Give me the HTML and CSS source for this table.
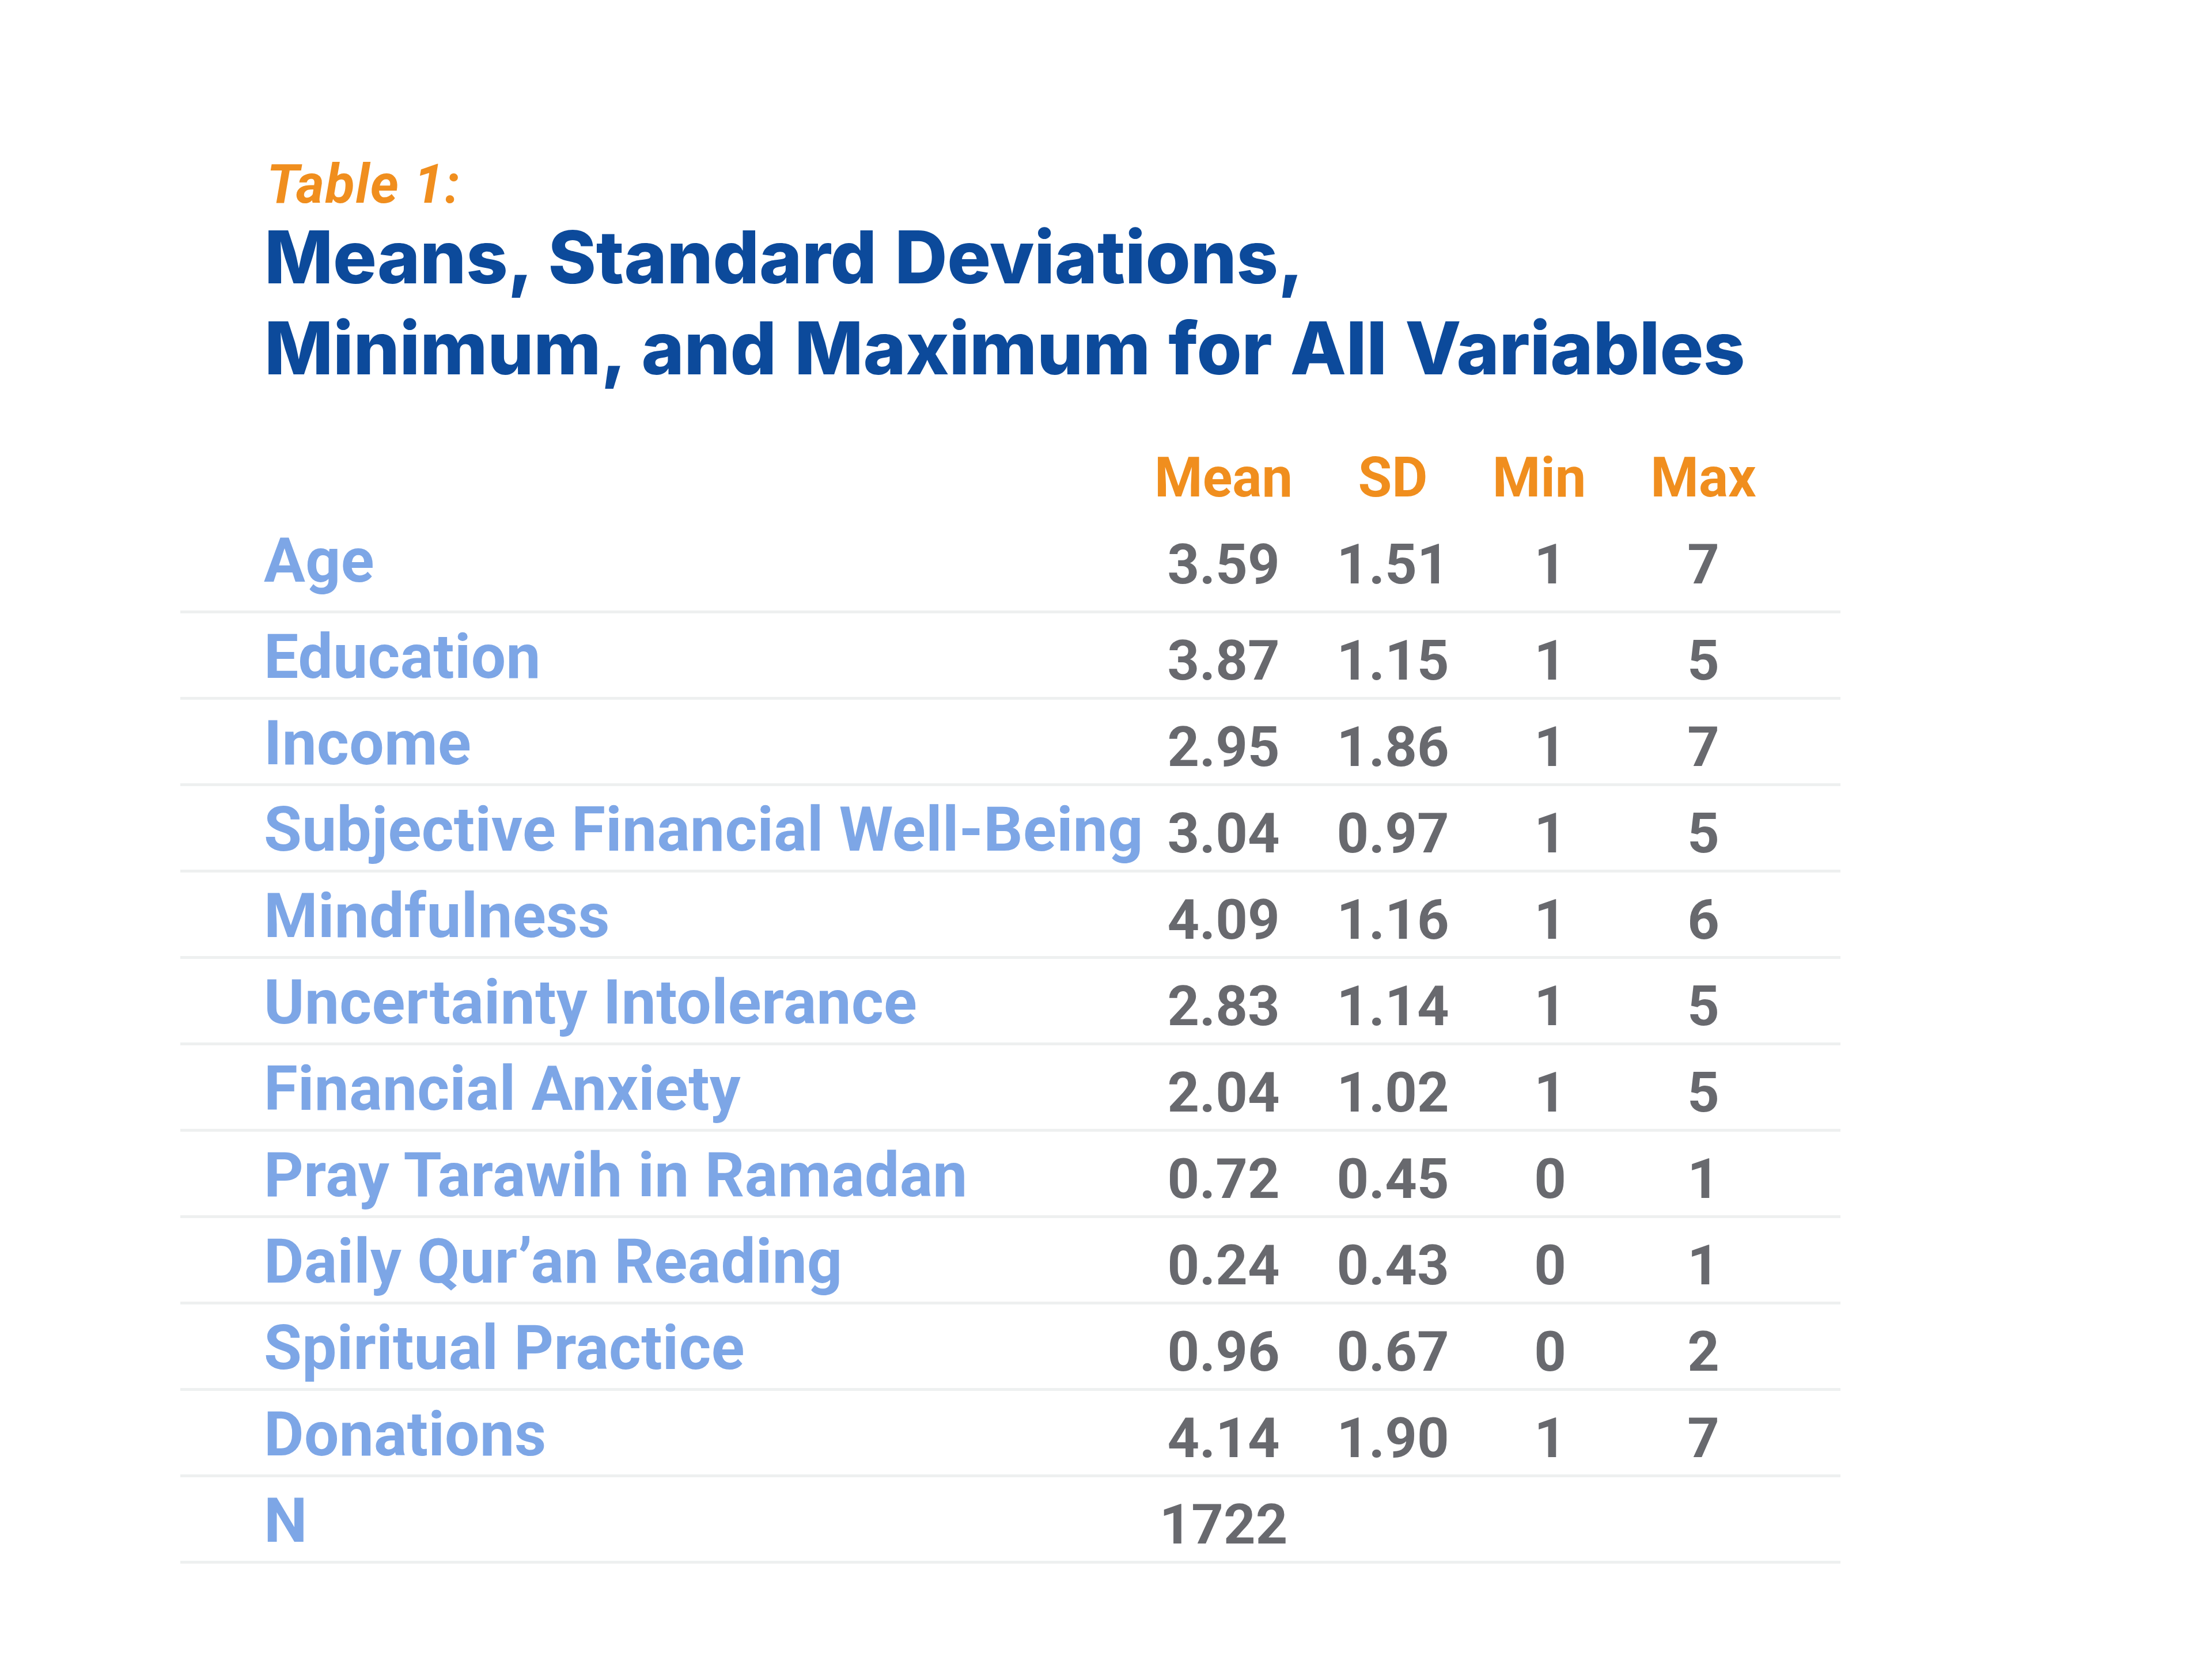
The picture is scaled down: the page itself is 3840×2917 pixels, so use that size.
FILE: index.html
```html
<!DOCTYPE html>
<html lang="en">
<head>
<meta charset="utf-8">
<title>Table 1: Means, Standard Deviations, Minimum, and Maximum for All Variables</title>
<link rel="stylesheet" href="styles.css">
</head>
<body>
<main class="sheet">
  <header class="heading">
    <p class="kicker">Table 1:</p>
    <h1 class="title">Means, Standard Deviations,<br>Minimum, and Maximum for All Variables</h1>
  </header>
  <section class="table">
    <div class="row head">
      <span class="label"></span>
      <span class="col">Mean</span>
      <span class="col">SD</span>
      <span class="col">Min</span>
      <span class="col">Max</span>
    </div>
    <div class="row first">
      <span class="label">Age</span>
      <span class="num">3.59</span><span class="num">1.51</span><span class="num min">1</span><span class="num">7</span>
    </div>
    <div class="row">
      <span class="label">Education</span>
      <span class="num">3.87</span><span class="num">1.15</span><span class="num min">1</span><span class="num">5</span>
    </div>
    <div class="row">
      <span class="label">Income</span>
      <span class="num">2.95</span><span class="num">1.86</span><span class="num min">1</span><span class="num">7</span>
    </div>
    <div class="row">
      <span class="label">Subjective Financial Well-Being</span>
      <span class="num">3.04</span><span class="num">0.97</span><span class="num min">1</span><span class="num">5</span>
    </div>
    <div class="row">
      <span class="label">Mindfulness</span>
      <span class="num">4.09</span><span class="num">1.16</span><span class="num min">1</span><span class="num">6</span>
    </div>
    <div class="row">
      <span class="label">Uncertainty Intolerance</span>
      <span class="num">2.83</span><span class="num">1.14</span><span class="num min">1</span><span class="num">5</span>
    </div>
    <div class="row">
      <span class="label">Financial Anxiety</span>
      <span class="num">2.04</span><span class="num">1.02</span><span class="num min">1</span><span class="num">5</span>
    </div>
    <div class="row">
      <span class="label">Pray Tarawih in Ramadan</span>
      <span class="num">0.72</span><span class="num">0.45</span><span class="num min">0</span><span class="num">1</span>
    </div>
    <div class="row">
      <span class="label">Daily Qur’an Reading</span>
      <span class="num">0.24</span><span class="num">0.43</span><span class="num min">0</span><span class="num">1</span>
    </div>
    <div class="row">
      <span class="label">Spiritual Practice</span>
      <span class="num">0.96</span><span class="num">0.67</span><span class="num min">0</span><span class="num">2</span>
    </div>
    <div class="row">
      <span class="label">Donations</span>
      <span class="num">4.14</span><span class="num">1.90</span><span class="num min">1</span><span class="num">7</span>
    </div>
    <div class="row">
      <span class="label">N</span>
      <span class="num">1722</span><span class="num"></span><span class="num min"></span><span class="num"></span>
    </div>
  </section>
</main>
</body>
</html>
```
FILE: styles.css
```css
html, body {
  margin: 0;
  padding: 0;
  background: #ffffff;
}

body {
  width: 3840px;
  height: 2917px;
  overflow: hidden;
}

.sheet {
  margin-left: 313px;
  width: 2882px;
  padding-top: 273px;
}

.heading {
  padding-left: 150px;
}

.kicker {
  margin: 0;
  font-family: Roboto, "Liberation Sans", sans-serif;
  font-style: italic;
  font-weight: 700;
  font-size: 94px;
  line-height: 94px;
  letter-spacing: 1.5px;
  color: #f08e1e;
}

.title {
  margin: 0 0 0 -4px;
  font-family: Inter, Roboto, sans-serif;
  font-weight: 800;
  font-size: 126.5px;
  line-height: 158px;
  letter-spacing: -0.3px;
  word-spacing: 4px;
  color: #0c4a9b;
}

.table {
  margin-top: 99px;
}

.row {
  display: grid;
  grid-template-columns: 1fr 260px 328px 180px 390px;
  align-items: baseline;
  box-sizing: border-box;
  height: 150px;
  padding: 22px 43px 0 145px;
  border-bottom: 5px solid #eef0f0;
}

.row.head {
  height: auto;
  padding-top: 0;
  padding-bottom: 0;
  border-bottom: 0;
}

.row.first {
  height: 187px;
  padding-top: 42px;
}

.label {
  font-family: Roboto, "Liberation Sans", sans-serif;
  font-weight: 700;
  font-size: 107px;
  line-height: 107px;
  letter-spacing: 0.4px;
  color: #7da6e6;
  white-space: nowrap;
}

.col {
  font-family: Roboto, "Liberation Sans", sans-serif;
  font-weight: 700;
  font-size: 95.6px;
  line-height: 95.6px;
  color: #f08e1e;
  text-align: center;
}

.num {
  font-family: Roboto, "Liberation Sans", sans-serif;
  font-weight: 700;
  font-size: 97px;
  line-height: 107px;
  color: #68696e;
  text-align: center;
  position: relative;
  top: 3px;
}

.num.min {
  padding-left: 38px;
}
```
